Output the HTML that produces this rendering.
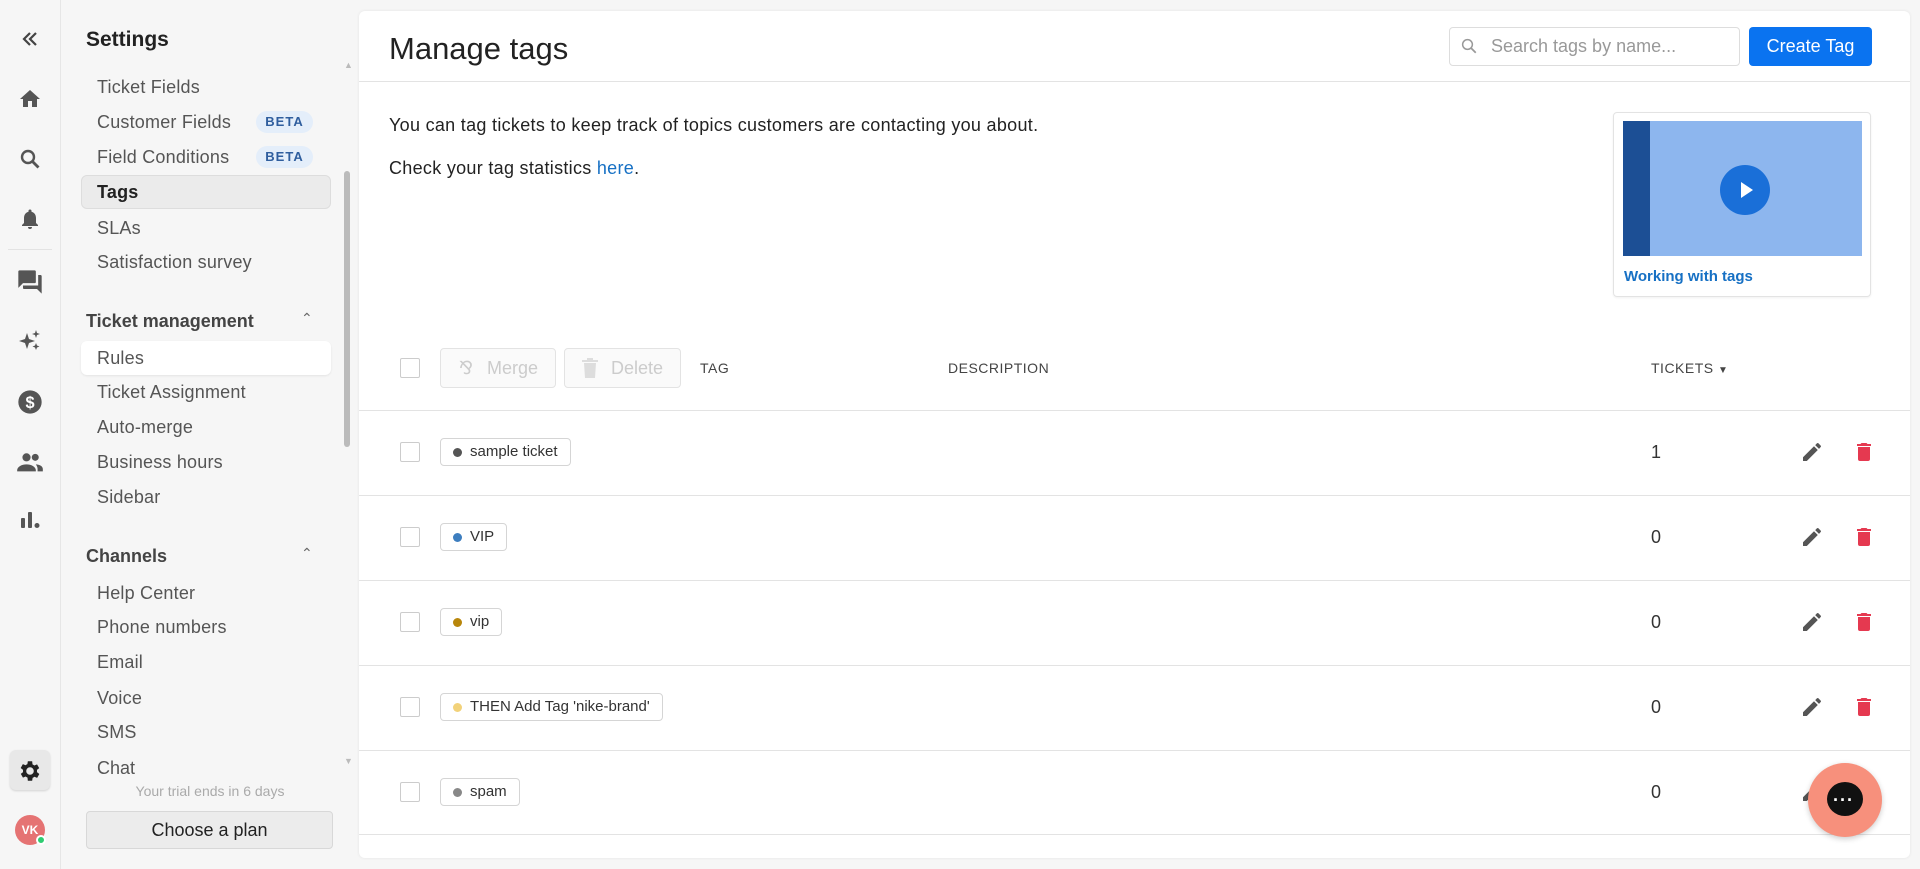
<!DOCTYPE html>
<html><head><meta charset="utf-8"><style>
*{box-sizing:border-box;margin:0;padding:0}
html,body{width:1920px;height:869px;overflow:hidden}
body{background:#f6f6f6;font-family:"Liberation Sans",sans-serif;color:#222;position:relative}
.abs{position:absolute}
.rail{left:0;top:0;width:61px;height:869px;background:#f6f6f6;border-right:1px solid #e6e6e6}
.ic{position:absolute;left:18px;width:24px;height:24px}
.side{left:61px;top:0;width:298px;height:869px;background:#f6f6f6}
.it{position:absolute;left:36px;font-size:18px;color:#555;letter-spacing:.2px}
.hd{position:absolute;left:25px;font-size:18px;font-weight:bold;color:#444}
.beta{position:absolute;left:195px;width:57px;height:22px;border-radius:11px;background:#e4eefa;color:#2f5e9e;font-size:13px;font-weight:bold;text-align:center;line-height:22px;letter-spacing:1px}
.card{left:359px;top:11px;width:1551px;height:847px;background:#fff;border-radius:6px;box-shadow:0 0 3px rgba(0,0,0,.08);overflow:hidden}
.row{position:absolute;left:0;width:1551px;border-top:1px solid #e3e3e3;height:85px}
.cb{position:absolute;left:41px;width:20px;height:20px;border:1px solid #ccc;border-radius:2px;background:#fff}
.chip{position:absolute;left:81px;height:28px;border:1px solid #d5d5d5;border-radius:4px;font-size:15px;line-height:26px;padding:0 12px 0 29px;color:#333}
.chip i{position:absolute;left:12px;top:9px;width:9px;height:9px;border-radius:50%}
.num{position:absolute;left:1292px;font-size:18px;color:#333}
</style></head><body>
<div class="abs rail">
<svg class="ic" style="top:27px" viewBox="0 0 24 24"><path d="M12 6l-6 6 6 6M18 6l-6 6 6 6" fill="none" stroke="#444" stroke-width="2.2"/></svg>
<svg class="ic" style="top:87px" viewBox="0 0 24 24"><path d="M10 20v-6h4v6h5v-8h3L12 3 2 12h3v8z" fill="#555"/></svg>
<svg class="ic" style="top:147px" viewBox="0 0 24 24"><circle cx="10" cy="10" r="6" fill="none" stroke="#555" stroke-width="2.4"/><path d="M14.5 14.5l6 6" stroke="#555" stroke-width="2.8"/></svg>
<svg class="ic" style="top:207px" viewBox="0 0 24 24"><path d="M12 22a2 2 0 002-2h-4a2 2 0 002 2zm6-6v-5c0-3-1.6-5.6-4.5-6.3V4a1.5 1.5 0 00-3 0v.7C7.6 5.4 6 8 6 11v5l-2 2v1h16v-1z" fill="#555"/></svg>
<div class="abs" style="left:8px;top:249px;width:44px;border-top:1px solid #e3e3e3"></div>
<svg class="ic" style="top:268px;left:16px;width:28px;height:28px" viewBox="0 0 24 24"><path d="M21 6h-2v9H6v2c0 .6.4 1 1 1h11l4 4V7c0-.6-.4-1-1-1zm-4 6V3c0-.6-.4-1-1-1H3c-.6 0-1 .4-1 1v14l4-4h10c.6 0 1-.4 1-1z" fill="#555"/></svg>
<svg class="ic" style="top:328px" viewBox="0 0 24 24"><path d="M9 5l2 6 6 2-6 2-2 6-2-6-6-2 6-2zM18 2l1 3 3 1-3 1-1 3-1-3-3-1 3-1zM18 15l1 2.5 2.5 1-2.5 1-1 2.5-1-2.5-2.5-1 2.5-1z" fill="#555"/></svg>
<svg class="ic" style="top:388px;left:16px;width:28px;height:28px" viewBox="0 0 24 24"><circle cx="12" cy="12" r="10" fill="#555"/><text x="12" y="17" font-size="14" font-weight="bold" text-anchor="middle" fill="#fff" font-family="Liberation Sans">$</text></svg>
<svg class="ic" style="top:448px;left:15px;width:30px;height:28px" viewBox="0 0 24 24"><circle cx="9" cy="8" r="3.5" fill="#555"/><circle cx="16.5" cy="8" r="3" fill="#555"/><path d="M1 19c0-3 4-5 8-5s8 2 8 5v1H1zM17 14c3 0 6 1.5 6 4v2h-4.5v-2c0-1.5-.6-2.8-1.5-4z" fill="#555"/></svg>
<svg class="ic" style="top:508px" viewBox="0 0 24 24"><rect x="3" y="10" width="4" height="10" rx="1" fill="#555"/><rect x="10" y="4" width="4" height="16" rx="1" fill="#555"/><circle cx="19" cy="17.5" r="2.5" fill="#555"/></svg>
<div class="abs" style="left:10px;top:750px;width:40px;height:40px;background:#e8e8e8;border-radius:6px;box-shadow:0 1px 2px rgba(0,0,0,.15)"></div>
<svg class="ic" style="top:758px;left:17px;width:26px;height:26px" viewBox="0 0 24 24"><path d="M19.4 13a7.5 7.5 0 000-2l2.1-1.6-2-3.5-2.5 1a7.6 7.6 0 00-1.7-1L15 3h-4l-.4 2.7a7.6 7.6 0 00-1.7 1l-2.5-1-2 3.5L6.6 11a7.5 7.5 0 000 2l-2.1 1.6 2 3.5 2.5-1c.5.4 1.1.8 1.7 1L11 21h4l.4-2.7c.6-.3 1.2-.6 1.7-1l2.5 1 2-3.5zM13 15.5a3.5 3.5 0 110-7 3.5 3.5 0 010 7z" fill="#222" transform="translate(-1 0)"/></svg>
<div class="abs" style="left:15px;top:815px;width:30px;height:30px;border-radius:50%;background:#e57373;color:#fff;font-size:12px;font-weight:bold;text-align:center;line-height:30px">VK</div>
<div class="abs" style="left:36px;top:835px;width:10px;height:10px;border-radius:50%;background:#2ecc71;border:2px solid #fff"></div>
</div>
<div class="abs side">
<div class="hd" style="top:28px;font-size:21px;color:#222">Settings</div>
<div class="it" style="top:77px">Ticket Fields</div>
<div class="it" style="top:112px">Customer Fields</div><div class="beta" style="top:111px">BETA</div>
<div class="it" style="top:147px">Field Conditions</div><div class="beta" style="top:146px">BETA</div>
<div class="abs" style="left:20px;top:175px;width:250px;height:34px;background:#ebebeb;border:1px solid #ddd;border-radius:6px"></div>
<div class="it" style="top:182px;color:#222;font-weight:bold">Tags</div>
<div class="it" style="top:218px">SLAs</div>
<div class="it" style="top:252px">Satisfaction survey</div>
<div class="hd" style="top:311px">Ticket management</div><div class="abs" style="left:240px;top:310px;color:#666;font-size:14px">&#8963;</div>
<div class="abs" style="left:20px;top:341px;width:250px;height:34px;background:#fff;border-radius:6px;box-shadow:0 1px 2px rgba(0,0,0,.08)"></div>
<div class="it" style="top:348px">Rules</div>
<div class="it" style="top:382px">Ticket Assignment</div>
<div class="it" style="top:417px">Auto-merge</div>
<div class="it" style="top:452px">Business hours</div>
<div class="it" style="top:487px">Sidebar</div>
<div class="hd" style="top:546px">Channels</div><div class="abs" style="left:240px;top:545px;color:#666;font-size:14px">&#8963;</div>
<div class="it" style="top:583px">Help Center</div>
<div class="it" style="top:617px">Phone numbers</div>
<div class="it" style="top:652px">Email</div>
<div class="it" style="top:688px">Voice</div>
<div class="it" style="top:722px">SMS</div>
<div class="abs" style="left:36px;top:758px;height:18px;overflow:hidden;font-size:18px;color:#555">Chat</div>
<div class="abs" style="left:283px;top:60px;font-size:9px;color:#bbb">&#9650;</div>
<div class="abs" style="left:283px;top:756px;font-size:9px;color:#bbb">&#9660;</div>
<div class="abs" style="left:283px;top:171px;width:6px;height:276px;background:#bbb;border-radius:3px"></div>
<div class="abs" style="left:0;width:298px;top:783px;text-align:center;font-size:14px;color:#aaa">Your trial ends in 6 days</div>
<div class="abs" style="left:25px;top:811px;width:247px;height:38px;background:#ececec;border:1px solid #d8d8d8;border-radius:4px;text-align:center;line-height:36px;font-size:18px;color:#222">Choose a plan</div>
</div>
<div class="abs card">
<div class="abs" style="left:30px;top:20px;font-size:31px;color:#222">Manage tags</div>
<div class="abs" style="left:1090px;top:16px;width:291px;height:39px;border:1px solid #ddd;border-radius:4px"></div>
<svg class="abs" style="left:1101px;top:26px" width="18" height="18" viewBox="0 0 24 24"><circle cx="10" cy="10" r="6.5" fill="none" stroke="#999" stroke-width="2"/><path d="M15 15l6 6" stroke="#999" stroke-width="2.4"/></svg>
<div class="abs" style="left:1132px;top:25px;font-size:18px;color:#999">Search tags by name...</div>
<div class="abs" style="left:1390px;top:16px;width:123px;height:39px;background:#0a73f0;border-radius:4px;color:#fff;font-size:18px;text-align:center;line-height:39px">Create Tag</div>
<div class="abs" style="left:0;top:70px;width:1551px;border-top:1px solid #e3e3e3"></div>
<div class="abs" style="left:30px;top:104px;font-size:18px;color:#222;letter-spacing:.3px">You can tag tickets to keep track of topics customers are contacting you about.</div>
<div class="abs" style="left:30px;top:147px;font-size:18px;color:#222;letter-spacing:.3px">Check your tag statistics <span style="color:#1670c4">here</span>.</div>
<div class="abs" style="left:1254px;top:101px;width:258px;height:185px;border:1px solid #e3e3e3;border-radius:4px;box-shadow:0 1px 2px rgba(0,0,0,.06)"></div>
<div class="abs" style="left:1264px;top:110px;width:239px;height:135px;background:#8db6ee"><div style="width:27px;height:135px;background:#1c4f95"></div></div>
<div class="abs" style="left:1361px;top:154px;width:50px;height:50px;border-radius:50%;background:#1a6fd8"></div>
<svg class="abs" style="left:1378px;top:169px" width="20" height="20" viewBox="0 0 20 20"><path d="M4 2l12 8-12 8z" fill="#fff"/></svg>
<div class="abs" style="left:1265px;top:257px;font-size:15px;font-weight:bold;color:#1670c4">Working with tags</div>
<div class="cb" style="top:347px"></div>
<div class="abs" style="left:81px;top:337px;width:116px;height:40px;border:1px solid #e3e3e3;border-radius:4px;background:#fafafa;color:#ccc;font-size:18px;line-height:38px;padding-left:46px">Merge</div>
<div class="abs" style="left:100px;top:347px;color:#ccc;font-size:18px">&#8523;</div>
<div class="abs" style="left:205px;top:337px;width:117px;height:40px;border:1px solid #e3e3e3;border-radius:4px;background:#fafafa;color:#ccc;font-size:18px;line-height:38px;padding-left:46px">Delete</div>
<svg class="abs" style="left:222px;top:347px" width="18" height="20" viewBox="0 0 18 20"><path d="M3 5h12l-1 15H4zM1 2h16v2H1zM6 0h6v2H6z" fill="#ddd"/></svg>
<div class="abs" style="left:341px;top:349px;font-size:14px;color:#444;letter-spacing:.5px">TAG</div>
<div class="abs" style="left:589px;top:349px;font-size:14px;color:#444;letter-spacing:.5px">DESCRIPTION</div>
<div class="abs" style="left:1292px;top:349px;font-size:14px;color:#444;letter-spacing:.5px">TICKETS <span style="font-size:10px">&#9660;</span></div>
<div class="row" style="top:399px"><div class="cb" style="top:31px"></div><div class="chip" style="top:27px"><i style="background:#555"></i>sample ticket</div><div class="num" style="top:31px">1</div></div>
<div class="row" style="top:484px"><div class="cb" style="top:31px"></div><div class="chip" style="top:27px"><i style="background:#3d7ebf"></i>VIP</div><div class="num" style="top:31px">0</div></div>
<div class="row" style="top:569px"><div class="cb" style="top:31px"></div><div class="chip" style="top:27px"><i style="background:#b8860b"></i>vip</div><div class="num" style="top:31px">0</div></div>
<div class="row" style="top:654px"><div class="cb" style="top:31px"></div><div class="chip" style="top:27px"><i style="background:#f2d27a"></i>THEN Add Tag 'nike-brand'</div><div class="num" style="top:31px">0</div></div>
<div class="row" style="top:739px"><div class="cb" style="top:31px"></div><div class="chip" style="top:27px"><i style="background:#888"></i>spam</div><div class="num" style="top:31px">0</div></div>
<div class="row" style="top:823px;height:24px"></div>
</div>
<svg width="0" height="0" style="position:absolute;top:0;left:0"><defs><g id="pen"><path d="M3 17.2V21h3.8l11-11-3.8-3.8zM20.7 7a1 1 0 000-1.4l-2.3-2.3a1 1 0 00-1.4 0l-1.8 1.8 3.8 3.8z" fill="#555"/></g><g id="bin"><path d="M6 19a2 2 0 002 2h8a2 2 0 002-2V7H6zM19 4h-3.5l-1-1h-5l-1 1H5v2h14z" fill="#e53950"/></g></defs></svg>
<svg class="abs" style="left:1800px;top:440px" width="24" height="24" viewBox="0 0 24 24"><use href="#pen"/></svg>
<svg class="abs" style="left:1852px;top:440px" width="24" height="24" viewBox="0 0 24 24"><use href="#bin"/></svg>
<svg class="abs" style="left:1800px;top:525px" width="24" height="24" viewBox="0 0 24 24"><use href="#pen"/></svg>
<svg class="abs" style="left:1852px;top:525px" width="24" height="24" viewBox="0 0 24 24"><use href="#bin"/></svg>
<svg class="abs" style="left:1800px;top:610px" width="24" height="24" viewBox="0 0 24 24"><use href="#pen"/></svg>
<svg class="abs" style="left:1852px;top:610px" width="24" height="24" viewBox="0 0 24 24"><use href="#bin"/></svg>
<svg class="abs" style="left:1800px;top:695px" width="24" height="24" viewBox="0 0 24 24"><use href="#pen"/></svg>
<svg class="abs" style="left:1852px;top:695px" width="24" height="24" viewBox="0 0 24 24"><use href="#bin"/></svg>
<svg class="abs" style="left:1800px;top:780px" width="24" height="24" viewBox="0 0 24 24"><use href="#pen"/></svg>
<div class="abs" style="left:1808px;top:763px;width:74px;height:74px;border-radius:50%;background:#f7907c;box-shadow:0 2px 6px rgba(0,0,0,.2)"></div>
<div class="abs" style="left:1827px;top:782px;width:36px;height:34px;border-radius:50%;background:#111"></div>
<div class="abs" style="left:1833px;top:790px;color:#fff;font-size:18px;font-weight:bold;letter-spacing:1px">&middot;&middot;&middot;</div>
</body></html>
